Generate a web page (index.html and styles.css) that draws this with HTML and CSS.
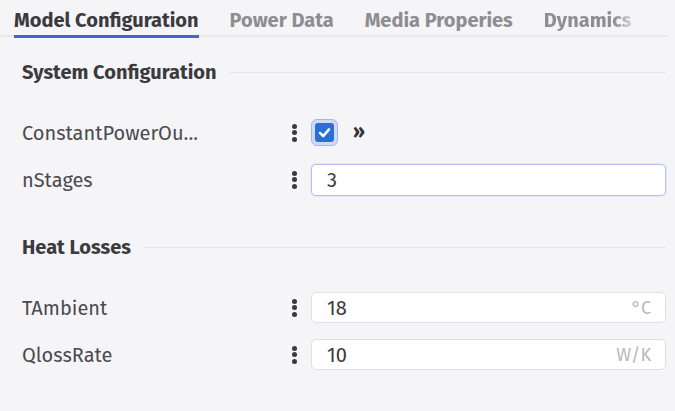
FILE: index.html
```html
<!DOCTYPE html>
<html>
<head>
<meta charset="utf-8">
<link rel="stylesheet" href="styles.css">
</head>
<body>
<div class="tabs">
  <div class="tab active">Model Configuration</div>
  <div class="tab">Power Data</div>
  <div class="tab">Media Properies</div>
  <div class="tab fade">Dynamics</div>
</div>
<div class="content">
  <section class="group">
    <div class="group-head"><span>System Configuration</span><i class="rule"></i></div>
    <div class="row">
      <div class="label"><span class="trunc">ConstantPowerOu...</span></div>
      <div class="kebab"><b></b><b></b><b></b></div>
      <div class="control">
        <span class="check-wrap"><span class="check"><svg viewBox="0 0 16 16" width="19" height="19"><path d="M4.2 8.4 L6.9 11 L11.8 5.4" fill="none" stroke="#fff" stroke-width="2.1" stroke-linecap="round" stroke-linejoin="round"/></svg></span></span>
        <span class="more">»</span>
      </div>
    </div>
    <div class="row">
      <div class="label">nStages</div>
      <div class="kebab"><b></b><b></b><b></b></div>
      <div class="control"><div class="input focus"><span>3</span></div></div>
    </div>
  </section>
  <section class="group">
    <div class="group-head"><span>Heat Losses</span><i class="rule"></i></div>
    <div class="row">
      <div class="label">TAmbient</div>
      <div class="kebab"><b></b><b></b><b></b></div>
      <div class="control"><div class="input"><span>18</span><span class="unit">°C</span></div></div>
    </div>
    <div class="row">
      <div class="label">QlossRate</div>
      <div class="kebab"><b></b><b></b><b></b></div>
      <div class="control"><div class="input"><span>10</span><span class="unit">W/K</span></div></div>
    </div>
  </section>
</div>
</body>
</html>
```

FILE: styles.css
```css
* { box-sizing: border-box; }
html, body { margin: 0; padding: 0; }
body {
  width: 675px;
  height: 411px;
  background: #f5f5f7;
  font-family: "Fira Sans", "Noto Sans", "Open Sans", sans-serif;
  color: #3a3a3e;
  overflow: hidden;
}
.tabs {
  display: flex;
  gap: 31px;
  margin: 0 8px 0 0;
  padding-left: 14px;
  height: 37px;
  border-bottom: 2px solid #e8e8ec;
}
.tab {
  font-size: 20px;
  line-height: 24px;
  font-weight: 700;
  color: #8e8e92;
  padding-top: 8px;
  height: 38px;
  white-space: nowrap;
}
.tab.active {
  color: #3b3b3f;
  border-bottom: 3px solid #4565cc;
}
.tab.fade {
  -webkit-mask-image: linear-gradient(to right, #000 80%, rgba(0,0,0,0.35));
  mask-image: linear-gradient(to right, #000 80%, rgba(0,0,0,0.35));
}
.content {
  padding: 23px 9px 0 22px;
  display: flex;
  flex-direction: column;
  gap: 40px;
}
.group {
  display: flex;
  flex-direction: column;
  gap: 16px;
}
.group-head {
  display: flex;
  align-items: center;
  height: 24px;
  margin-bottom: 17px;
  font-size: 20px;
  font-weight: 700;
  color: #3b3b3f;
}
.rule {
  flex: 1;
  height: 1px;
  background: #e6e6ea;
  margin-left: 12px;
}
.row {
  display: flex;
  align-items: center;
  height: 31px;
}
.label {
  width: 266px;
  font-size: 20px;
  color: #4a4a4f;
  white-space: nowrap;
}
.trunc {
  display: inline-block;
  max-width: 230px;
  overflow: hidden;
  text-overflow: ellipsis;
  vertical-align: middle;
}
.kebab {
  width: 12px;
  display: flex;
  flex-direction: column;
  align-items: center;
  gap: 1.5px;
  margin-right: 11px;
}
.kebab b {
  display: block;
  width: 5px;
  height: 5px;
  border-radius: 50%;
  background: #3a3a3e;
}
.control {
  flex: 1;
  display: flex;
  align-items: center;
}
.check-wrap {
  width: 27px;
  height: 27px;
  border-radius: 6px;
  background: #d0daf6;
  border: 1px solid #a7b6ea;
  display: flex;
  align-items: center;
  justify-content: center;
}
.check {
  width: 19px;
  height: 19px;
  border-radius: 3px;
  background: #2a6fd8;
  display: flex;
  align-items: center;
  justify-content: center;
}
.check svg { display: block; }
.more {
  margin-left: 15px;
  font-size: 19px;
  font-weight: 700;
  color: #333;
  line-height: 1;
  margin-top: -3px;
}
.input {
  flex: 1;
  height: 31px;
  background: #fff;
  border: 1px solid #e0e0e4;
  border-radius: 5px;
  display: flex;
  align-items: center;
  justify-content: space-between;
  padding: 0 14px 0 15px;
  font-size: 20px;
  color: #3a3a3e;
}
.input.focus {
  height: 32px;
  border-color: #b4c0ee;
  box-shadow: 0 0 0 1px #e3e8fa;
}
.unit {
  font-size: 18px;
  color: #b8b8bd;
}
```
